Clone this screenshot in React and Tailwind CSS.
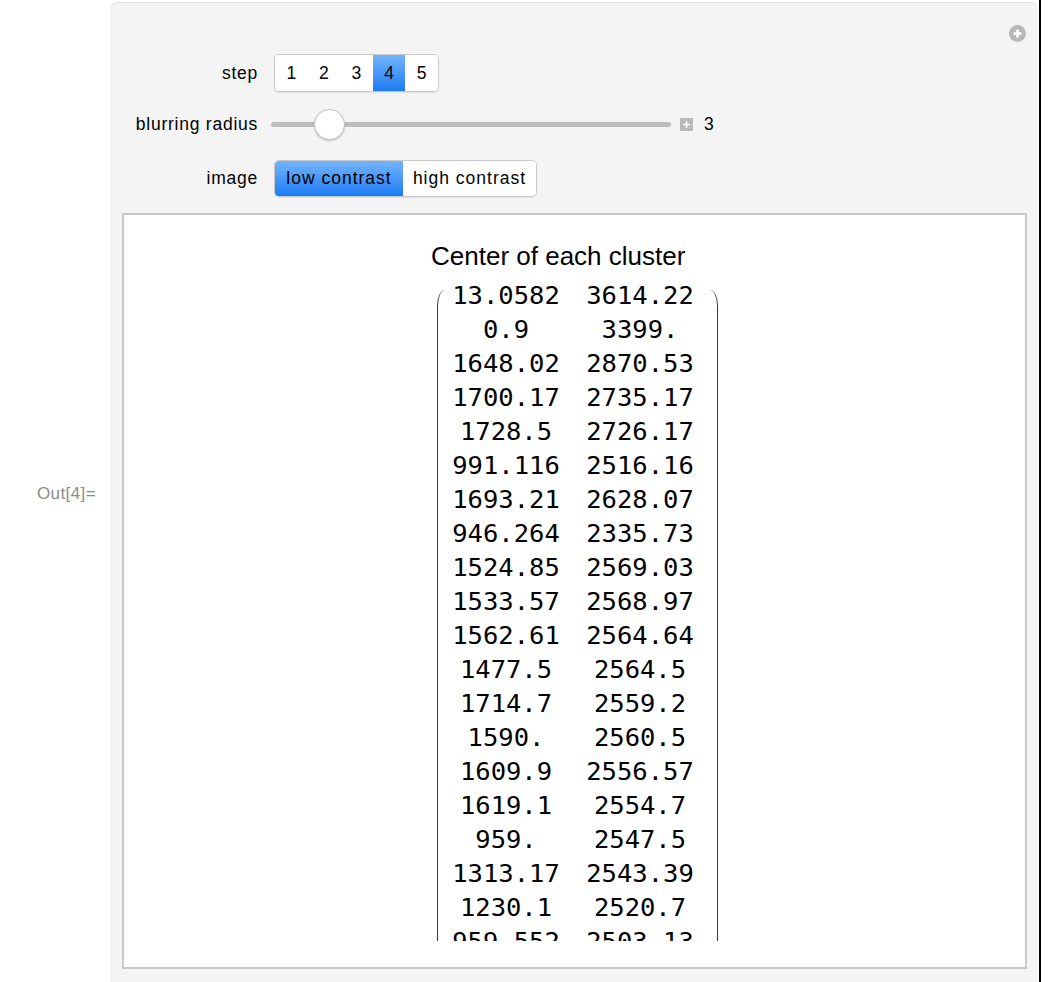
import { useState } from 'react';

const rows = [
  ['13.0582', '3614.22'],
  ['0.9', '3399.'],
  ['1648.02', '2870.53'],
  ['1700.17', '2735.17'],
  ['1728.5', '2726.17'],
  ['991.116', '2516.16'],
  ['1693.21', '2628.07'],
  ['946.264', '2335.73'],
  ['1524.85', '2569.03'],
  ['1533.57', '2568.97'],
  ['1562.61', '2564.64'],
  ['1477.5', '2564.5'],
  ['1714.7', '2559.2'],
  ['1590.', '2560.5'],
  ['1609.9', '2556.57'],
  ['1619.1', '2554.7'],
  ['959.', '2547.5'],
  ['1313.17', '2543.39'],
  ['1230.1', '2520.7'],
  ['959.552', '2503.13'],
  ['1104.6', '2497.25'],
  ['1387.09', '2481.6'],
];

const sans = "font-['Liberation_Sans',Arial,sans-serif]";

function Label({ children }) {
  return (
    <div className="w-[148px] shrink-0 text-right text-[17.5px] tracking-[0.75px] text-black">
      {children}
    </div>
  );
}

export default function App() {
  const [step, setStep] = useState(4);
  const [contrast, setContrast] = useState('low');

  const blue = 'bg-gradient-to-b from-[#72b4f8] to-[#197af5]';

  return (
    <div className={`flex h-[982px] w-[1056px] overflow-hidden bg-white ${sans}`}>
      <div className="flex w-[110px] shrink-0 items-center justify-end pr-[14px] pt-[6px]">
        <span className="text-[17px] tracking-[0.4px] text-[#8c8c8c]">Out[4]=</span>
      </div>

      <div className="relative mt-[2px] flex h-[982px] w-[928px] shrink-0 flex-col rounded-t-[7px] border-t border-[#e2e2e2] bg-[#f4f4f4] pt-[51px]">
        <div className="absolute right-[12px] top-[22px] flex h-[17px] w-[17px] items-center justify-center rounded-full bg-[#b8b8b8]">
          <svg width="11" height="11" viewBox="0 0 11 11">
            <path d="M5.5 1.5v8M1.5 5.5h8" stroke="white" strokeWidth="2.6" />
          </svg>
        </div>

        <div className="flex h-[38px] items-center">
          <Label>step</Label>
          <div className="ml-[16px] flex h-[38px] overflow-hidden rounded-[5px] border border-[#c9c9c9] bg-white shadow-[0_1px_1px_rgba(0,0,0,0.08)]">
            {[1, 2, 3, 4, 5].map((n) => (
              <button
                key={n}
                type="button"
                onClick={() => setStep(n)}
                className={`flex h-full w-[32.6px] items-center justify-center text-[17.5px] text-black ${
                  step === n ? blue : 'bg-white'
                }`}
              >
                {n}
              </button>
            ))}
          </div>
        </div>

        <div className="mt-[16px] flex h-[32px] items-center">
          <Label>blurring radius</Label>
          <div className="relative ml-[13px] h-[5px] w-[400px] rounded-full bg-[#bdbdbd]">
            <div className="absolute left-[43px] top-[-13px] h-[31px] w-[31px] rounded-full border border-[#c4c4c4] bg-white shadow-[0_1px_2px_rgba(0,0,0,0.2)]" />
          </div>
          <div className="ml-[9px] flex h-[13px] w-[13px] items-center justify-center rounded-[1px] bg-[#b9b9b9]">
            <svg width="9" height="9" viewBox="0 0 9 9">
              <path d="M4.5 1v7M1 4.5h7" stroke="white" strokeWidth="1.6" />
            </svg>
          </div>
          <span className="ml-[11px] text-[17.5px] text-black">3</span>
        </div>

        <div className="mt-[20px] flex h-[37px] items-center">
          <Label>image</Label>
          <div className="ml-[16px] flex h-[37px] overflow-hidden rounded-[5px] border border-[#c9c9c9] bg-white shadow-[0_1px_1px_rgba(0,0,0,0.08)]">
            <button
              type="button"
              onClick={() => setContrast('low')}
              className={`h-full w-[128px] text-[17.5px] tracking-[1px] text-black ${contrast === 'low' ? blue : 'bg-white'}`}
            >
              low contrast
            </button>
            <button
              type="button"
              onClick={() => setContrast('high')}
              className={`h-full w-[133px] text-[17.5px] tracking-[1px] text-black ${contrast === 'high' ? blue : 'bg-white'}`}
            >
              high contrast
            </button>
          </div>
        </div>

        <div className="ml-[12px] mt-[16px] h-[756px] w-[905px] border-2 border-[#c8c8c8] bg-white pt-[26px]">
          <div className="mx-auto flex w-fit flex-col items-start">
            <div className="text-[26px] leading-[30px] text-black">Center of each cluster</div>
            <div className="ml-[6px] mt-[7px] h-[663px] overflow-hidden">
              <div className="flex">
                <div className="mt-[12px] w-[11px] rounded-tl-[8px_16px] border-l-[1.5px] border-[#3a3a3a]" />
                <div className="grid grid-cols-[116px_116px] gap-x-[18px] font-['DejaVu_Sans_Mono',monospace] text-[25.5px] leading-[34px] text-black">
                  {rows.map(([a, b]) => (
                    <div key={a + b} className="contents">
                      <div className="text-center">{a}</div>
                      <div className="text-center">{b}</div>
                    </div>
                  ))}
                </div>
                <div className="mt-[12px] w-[20px] rounded-tr-[8px_16px] border-r-[1.5px] border-[#3a3a3a]" />
              </div>
            </div>
          </div>
        </div>
      </div>

      <div className="ml-[1px] h-[982px] w-[2px] shrink-0 bg-black" />
    </div>
  );
}
